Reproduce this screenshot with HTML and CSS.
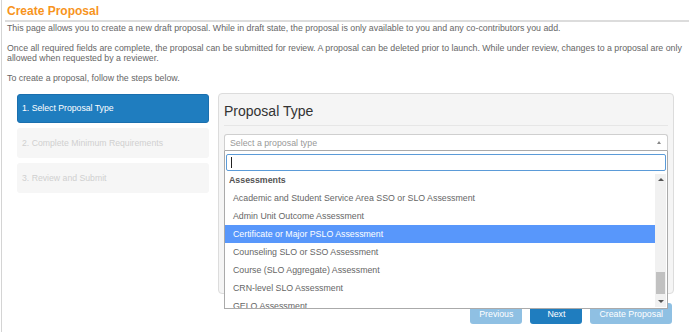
FILE: index.html
```html
<!DOCTYPE html>
<html lang="en">
<head>
	<meta charset="UTF-8" name="viewport" content="width=device-width" />
	<title>Create Proposal</title>
	<link rel="stylesheet" href="styles.css">
</head>
<body>
	<div class="page">
		<h1 class="title">Create Proposal</h1>
		<p class="intro">This page allows you to create a new draft proposal. While in draft state, the proposal is only available to you and any co-contributors you add.</p>
		<p class="intro">Once all required fields are complete, the proposal can be submitted for review. A proposal can be deleted prior to launch. While under review, changes to a proposal are only allowed when requested by a reviewer.</p>
		<p class="intro">To create a proposal, follow the steps below.</p>

		<div class="wizard">
			<ul class="steps">
				<li class="step active">1. Select Proposal Type</li>
				<li class="step">2. Complete Minimum Requirements</li>
				<li class="step">3. Review and Submit</li>
			</ul>

			<div class="main">
				<div class="panel">
					<h2 class="panel-title">Proposal Type</h2>
					<div class="select">
						<div class="select-box">
							<span class="placeholder">Select a proposal type</span>
							<span class="arrow"></span>
						</div>
						<div class="dropdown">
							<div class="search"><span class="caret"></span></div>
							<div class="results">
								<ul class="options">
									<li class="group">Assessments</li>
									<li class="option">Academic and Student Service Area SSO or SLO Assessment</li>
									<li class="option">Admin Unit Outcome Assessment</li>
									<li class="option highlighted">Certificate or Major PSLO Assessment</li>
									<li class="option">Counseling SLO or SSO Assessment</li>
									<li class="option">Course (SLO Aggregate) Assessment</li>
									<li class="option">CRN-level SLO Assessment</li>
									<li class="option">GELO Assessment</li>
								</ul>
								<div class="scrollbar">
									<span class="sb-btn up"></span>
									<div class="sb-track"><span class="sb-thumb"></span></div>
									<span class="sb-btn down"></span>
								</div>
							</div>
						</div>
					</div>
				</div>
				<div class="actions">
					<button class="btn disabled">Previous</button>
					<button class="btn">Next</button>
					<button class="btn disabled">Create Proposal</button>
				</div>
			</div>
		</div>
	</div>
</body>
</html>
```

FILE: styles.css
```css
html, body {
	margin: 0;
	padding: 0;
	background: #fff;
}
body {
	font-family: "Liberation Sans", Arial, sans-serif;
	color: #666;
}
.page {
	margin-left: 1px;
	border-left: 1px solid #d4d4d4;
	min-height: 332px;
	box-sizing: border-box;
	padding-left: 3px;
}
.title {
	margin: 0;
	padding: 2px 0 0 2px;
	font-size: 12px;
	line-height: 18px;
	font-weight: bold;
	color: #f7941d;
	border-bottom: 2px solid #dcdcdc;
}
.intro {
	margin: 0 4px 10px 2px;
	font-size: 8.8px;
	line-height: 10px;
	color: #666;
}
.intro:first-of-type {
	margin-top: 1px;
}
.wizard {
	display: flex;
	gap: 9px;
	margin-top: 10px;
	padding: 0 15px 0 12px;
}
.steps {
	list-style: none;
	margin: 1px 0 0;
	padding: 0;
	width: 192px;
	display: flex;
	flex-direction: column;
	gap: 5px;
	flex-shrink: 0;
}
.step {
	height: 30px;
	line-height: 30px;
	padding-left: 5px;
	font-size: 8.7px;
	color: #d0d0d0;
	background: #f6f6f6;
	border-radius: 3px;
	box-sizing: border-box;
}
.step.active {
	height: 29px;
	line-height: 27px;
	padding-left: 4px;
	background: #1f7dbf;
	border: 1px solid #1a6fae;
	color: #fff;
}
.main {
	flex: 1;
}
.panel {
	background: #f5f5f5;
	border: 1px solid #dcdcdc;
	border-radius: 4px;
	height: 201px;
	box-sizing: border-box;
	padding: 7px 5px 0;
}
.panel-title {
	margin: 0;
	font-size: 14px;
	font-weight: normal;
	line-height: 20px;
	color: #333;
	padding-bottom: 4px;
	border-bottom: 1px solid #e6e6e6;
}
.select {
	position: relative;
	margin-top: 8px;
}
.select-box {
	height: 17px;
	box-sizing: border-box;
	background: #fff;
	border: 1px solid #cfcfcf;
	border-bottom-color: #aaa;
	border-radius: 3px 3px 0 0;
	display: flex;
	align-items: center;
	justify-content: space-between;
	padding: 0 5px;
}
.placeholder {
	font-size: 8.8px;
	color: #999;
}
.arrow {
	width: 0;
	height: 0;
	border-left: 2px solid transparent;
	border-right: 2px solid transparent;
	border-bottom: 3px solid #888;
	margin-right: 1px;
}
.dropdown {
	position: absolute;
	top: 100%;
	left: 0;
	right: 0;
	z-index: 10;
	background: #fff;
	border: 1px solid #aaa;
	border-top: 0;
	box-sizing: border-box;
}
.search {
	margin: 3px 1px 0;
	height: 17px;
	box-sizing: border-box;
	border: 1px solid #5b9bd8;
	border-radius: 2px;
	display: flex;
	align-items: center;
	padding-left: 4px;
}
.caret {
	width: 1px;
	height: 11px;
	background: #222;
}
.results {
	display: flex;
	height: 137px;
	overflow: hidden;
}
.options {
	flex: 1;
	list-style: none;
	margin: 0;
	padding: 0;
	font-size: 8.8px;
	color: #666;
}
.group {
	height: 18px;
	line-height: 18px;
	padding-left: 4px;
	font-weight: bold;
	color: #555;
}
.option {
	height: 18px;
	line-height: 18px;
	padding-left: 8px;
}
.option.highlighted {
	background: #5897fb;
	color: #fff;
}
.scrollbar {
	width: 11px;
	margin: 3px 1px 1px 0;
	background: #f1f1f1;
	display: flex;
	flex-direction: column;
	align-items: center;
}
.sb-btn {
	height: 11px;
	width: 11px;
	display: flex;
	align-items: center;
	justify-content: center;
	flex-shrink: 0;
}
.sb-btn::before {
	content: "";
	border-left: 3px solid transparent;
	border-right: 3px solid transparent;
}
.sb-btn.up::before {
	border-bottom: 3px solid #555;
}
.sb-btn.down::before {
	border-top: 3px solid #555;
}
.sb-track {
	flex: 1;
	width: 100%;
	display: flex;
	flex-direction: column;
	justify-content: flex-end;
	padding-bottom: 2px;
	box-sizing: border-box;
}
.sb-thumb {
	display: block;
	height: 22px;
	margin: 0 1px;
	background: #c1c1c1;
}
.actions {
	display: flex;
	justify-content: flex-end;
	gap: 8px;
	margin-top: 9px;
	padding-right: 2px;
}
.btn {
	height: 21px;
	min-width: 52px;
	padding: 0 9px;
	border: 0;
	border-radius: 3px;
	background: #1f7dbf;
	color: #fff;
	font-family: "Liberation Sans", Arial, sans-serif;
	font-size: 8.8px;
	box-sizing: border-box;
}
.btn.disabled {
	background: #8fc0e3;
}
```
